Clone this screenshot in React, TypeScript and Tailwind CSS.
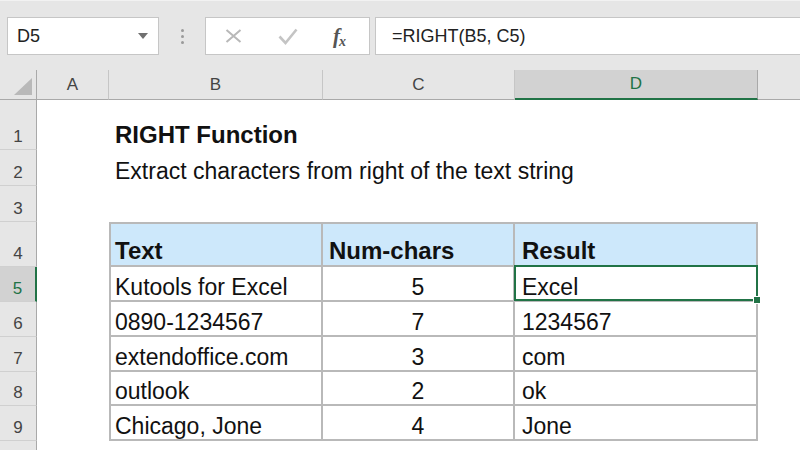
import React from 'react'

const cols = 'grid grid-cols-[37px_72px_214px_192px_243px_1fr]'

const data = [
  { text: 'Kutools for Excel', num: '5', result: 'Excel', h: 'h-[35px]' },
  { text: '0890-1234567', num: '7', result: '1234567', h: 'h-[35px]' },
  { text: 'extendoffice.com', num: '3', result: 'com', h: 'h-[35px]' },
  { text: 'outlook', num: '2', result: 'ok', h: 'h-[34px]' },
  { text: 'Chicago, Jone', num: '4', result: 'Jone', h: 'h-[35px]' },
]

function FormulaBar() {
  return (
    <div className="h-[70px] bg-[#e6e6e6] border-t border-[#f2f2f2] flex items-start pt-[16px]">
      {/* Name box */}
      <div className="ml-[7px] w-[152px] h-[38px] bg-white border border-[#c6c6c6] flex items-center justify-between pl-[9px] pr-[10px] text-[18px] text-[#222]">
        <span>D5</span>
        <svg width="10" height="6" viewBox="0 0 10 6">
          <path d="M0 0H10L5 6Z" fill="#707070" />
        </svg>
      </div>

      {/* Grip dots */}
      <div className="w-[46px] h-[38px] flex flex-col items-center justify-center gap-[3px]">
        <span className="w-[3px] h-[3px] rounded-full bg-[#9a9a9a]" />
        <span className="w-[3px] h-[3px] rounded-full bg-[#9a9a9a]" />
        <span className="w-[3px] h-[3px] rounded-full bg-[#9a9a9a]" />
      </div>

      {/* Cancel / Enter / Insert function */}
      <div className="w-[165px] h-[38px] bg-white border border-[#c6c6c6] flex items-center pl-[19px]">
        <svg width="17" height="14" viewBox="0 0 17 14">
          <path d="M1.5 1L15.5 13M15.5 1L1.5 13" stroke="#b8b8b8" strokeWidth="2" fill="none" />
        </svg>
        <svg className="ml-[36px]" width="20" height="17" viewBox="0 0 20 17">
          <path d="M1.5 8.5L7.5 15L18.5 1.5" stroke="#c4c4c4" strokeWidth="2.6" fill="none" />
        </svg>
        <span className="ml-[35px] font-['Liberation_Serif',serif] italic font-bold text-[#555] leading-none flex items-end">
          <span className="text-[21px]">f</span>
          <span className="text-[14px] -ml-[1px] translate-y-[2px]">x</span>
        </span>
      </div>

      {/* Formula input */}
      <div className="ml-[5px] flex-1 h-[38px] bg-white border border-r-0 border-[#c6c6c6] pl-[16px] flex items-center text-[18px] text-[#222]">
        =RIGHT(B5, C5)
      </div>
    </div>
  )
}

function ColumnHeaders() {
  return (
    <div className={`${cols} h-[30px] bg-[#e6e6e6] text-[17px] text-[#444]`}>
      <div className="border-r border-b border-[#a9a9a9] flex items-end justify-end pr-[4px] pb-[4px]">
        <svg width="18" height="17" viewBox="0 0 18 17">
          <path d="M18 0V17H0Z" fill="#b9b9b9" />
        </svg>
      </div>
      <div className="border-r border-r-[#c6c6c6] border-b border-b-[#a9a9a9] flex items-center justify-center">A</div>
      <div className="border-r border-r-[#c6c6c6] border-b border-b-[#a9a9a9] flex items-center justify-center">B</div>
      <div className="border-r border-r-[#c6c6c6] border-b border-b-[#a9a9a9] flex items-center justify-center">C</div>
      <div className="bg-[#d2d2d2] border-r border-r-[#a9a9a9] border-b-2 border-b-[#217346] flex items-center justify-center text-[#217346]">
        D
      </div>
      <div className="border-b border-b-[#a9a9a9]" />
    </div>
  )
}

function RowHead({ n, active }: { n: number; active?: boolean }) {
  return (
    <div
      className={
        active
          ? 'flex items-end justify-center pb-[4px] text-[17px] leading-none bg-[#d2d2d2] text-[#217346] border-b border-b-[#d0d0d0] border-r-2 border-r-[#217346]'
          : 'flex items-end justify-center pb-[4px] text-[17px] leading-none bg-[#e6e6e6] text-[#444] border-b border-b-[#d0d0d0] border-r border-r-[#a9a9a9]'
      }
    >
      {n}
    </div>
  )
}

export default function App() {
  return (
    <div className="w-[800px] h-[450px] overflow-hidden bg-white font-['Liberation_Sans',Arial,sans-serif] text-[#111]">
      <FormulaBar />
      <ColumnHeaders />

      {/* Title */}
      <div className={`${cols} h-[50px]`}>
        <RowHead n={1} />
        <div />
        <div className="flex items-end pl-[6px] pb-[2px] text-[24px] leading-[26px] font-bold whitespace-nowrap">
          RIGHT Function
        </div>
        <div />
        <div />
        <div />
      </div>

      <div className={`${cols} h-[36px]`}>
        <RowHead n={2} />
        <div />
        <div className="flex items-end pl-[6px] pb-[2px] text-[23px] leading-[26px] whitespace-nowrap">
          Extract characters from right of the text string
        </div>
        <div />
        <div />
        <div />
      </div>

      <div className={`${cols} h-[36px]`}>
        <RowHead n={3} />
      </div>

      {/* Table header */}
      <div className={`${cols} h-[45px]`}>
        <RowHead n={4} />
        <div />
        <div className="flex items-end pl-[4px] pb-[1px] text-[24px] leading-[26px] font-bold bg-[#cde8fb] border-2 border-[#b9b9b9]">
          Text
        </div>
        <div className="flex items-end pl-[6px] pb-[1px] text-[24px] leading-[26px] font-bold bg-[#cde8fb] border-t-2 border-r-2 border-b-2 border-[#b9b9b9]">
          Num-chars
        </div>
        <div className="flex items-end pl-[7px] pb-[1px] text-[24px] leading-[26px] font-bold bg-[#cde8fb] border-t-2 border-r-2 border-b-2 border-[#b9b9b9]">
          Result
        </div>
        <div />
      </div>

      {data.map((r, i) => (
        <div key={r.text} className={`${cols} ${r.h}`}>
          <RowHead n={i + 5} active={i === 0} />
          <div />
          <div className="flex items-end pl-[4px] text-[23px] leading-[26px] whitespace-nowrap border-l-2 border-r-2 border-b-2 border-[#b9b9b9]">
            {r.text}
          </div>
          <div className="flex items-end justify-center text-[23px] leading-[26px] border-r-2 border-b-2 border-[#b9b9b9]">
            {r.num}
          </div>
          <div className="relative flex items-end pl-[7px] text-[23px] leading-[26px] border-r-2 border-b-2 border-[#b9b9b9]">
            {r.result}
            {i === 0 && (
              <>
                <div className="absolute -left-px -top-[2px] -right-[2px] -bottom-px border-2 border-[#217346] z-10" />
                <div className="absolute -right-[5px] -bottom-[4px] w-[8px] h-[8px] bg-[#217346] border border-white z-20" />
              </>
            )}
          </div>
          <div />
        </div>
      ))}

      <div className={`${cols} h-[35px]`}>
        <RowHead n={10} />
      </div>
    </div>
  )
}
